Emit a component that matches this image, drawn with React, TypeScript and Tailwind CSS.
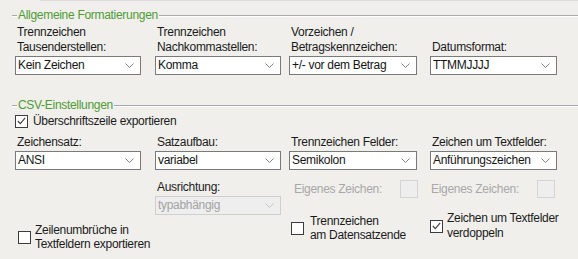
import React from "react";

function GroupTitle({ text }: { text: string }) {
  return (
    <div className="flex items-center h-[15px]">
      <span className="ml-[12px] w-[5px] h-[2px] border-t border-[#a9a9a9] border-b-white border-b" />
      <span className="px-[1px] text-[#4f9b35] leading-[15px]">{text}</span>
      <span className="flex-1 h-[2px] border-t border-[#a9a9a9] border-b-white border-b" />
    </div>
  );
}

function Chevron({ disabled }: { disabled?: boolean }) {
  return (
    <svg width="9" height="5" viewBox="0 0 9 5" className="shrink-0">
      <path d="M0.5 0.5 L4.5 4.5 L8.5 0.5" fill="none" stroke={disabled ? "#c4c4c4" : "#808080"} strokeWidth="1" />
    </svg>
  );
}

function Select({ value, disabled, w = "w-[126px]" }: { value: string; disabled?: boolean; w?: string }) {
  return (
    <div
      className={`${w} h-[19px] flex items-center justify-between pl-[2px] pr-[6px] border ${
        disabled ? "border-[#cfcfcf] bg-[#eeeeee] text-[#a3a3a3]" : "border-[#7a7a7a] bg-white text-[#141414]"
      }`}
    >
      <span className="leading-[15px] whitespace-nowrap">{value}</span>
      <Chevron disabled={disabled} />
    </div>
  );
}

function Check({ checked }: { checked?: boolean }) {
  return (
    <span className="w-[13px] h-[13px] shrink-0 border border-[#3c3c3c] bg-white flex items-center justify-center">
      {checked && (
        <svg width="9" height="8" viewBox="0 0 9 8">
          <path d="M0.8 4 L3.3 6.6 L8.2 0.8" fill="none" stroke="#3c3c3c" strokeWidth="1.1" />
        </svg>
      )}
    </span>
  );
}

function Label({ children }: { children: React.ReactNode }) {
  return <div className="pl-[2px] leading-[15px] whitespace-nowrap">{children}</div>;
}

function EigenesZeichen() {
  return (
    <div className="flex items-center h-[18px] text-[#a8a8a8]">
      <span className="pl-[5px] w-[111px] leading-[15px] whitespace-nowrap">Eigenes Zeichen:</span>
      <span className="w-[18px] h-[18px] border border-[#d4d4d4] bg-[#eeeeee]" />
    </div>
  );
}

export default function App() {
  return (
    <div className="w-[578px] h-[259px] overflow-hidden bg-[#f0efec] text-[12px] tracking-[-0.3px] text-[#1b1b1b] font-['Liberation_Sans',Arial,sans-serif]">
      <div className="ml-[40px] h-px bg-[#dcdcdc]" />
      <div className="mt-[7px]">
        <GroupTitle text="Allgemeine Formatierungen" />
      </div>

      <div className="pl-[15px] mt-[2px] grid grid-cols-[140px_135px_140px_1fr]">
        <div className="flex flex-col">
          <Label>Trennzeichen<br />Tausenderstellen:</Label>
          <div className="mt-[1px]"><Select value="Kein Zeichen" /></div>
        </div>
        <div className="flex flex-col">
          <Label>Trennzeichen<br />Nachkommastellen:</Label>
          <div className="mt-[1px]"><Select value="Komma" /></div>
        </div>
        <div className="flex flex-col -ml-[1px]">
          <Label>Vorzeichen /<br />Betragskennzeichen:</Label>
          <div className="mt-[1px]"><Select value="+/- vor dem Betrag" w="w-[128px]" /></div>
        </div>
        <div className="flex flex-col justify-end">
          <Label>Datumsformat:</Label>
          <div className="mt-[1px]"><Select value="TTMMJJJJ" w="w-[127px]" /></div>
        </div>
      </div>

      <div className="mt-[23px]">
        <GroupTitle text="CSV-Einstellungen" />
      </div>

      <div className="pl-[15px] mt-[1px] flex items-center gap-[5px] h-[14px]">
        <Check checked />
        <span className="leading-[15px] whitespace-nowrap">Überschriftszeile exportieren</span>
      </div>

      <div className="pl-[15px] mt-[7px] grid grid-cols-[140px_135px_140px_1fr]">
        <div className="flex flex-col">
          <Label>Zeichensatz:</Label>
          <div className="mt-[1px]"><Select value="ANSI" /></div>
          <div className="mt-[53px] ml-[3px] flex items-center gap-[4px]">
            <Check />
            <span className="leading-[14px] whitespace-nowrap">Zeilenumbrüche in<br />Textfeldern exportieren</span>
          </div>
        </div>
        <div className="flex flex-col">
          <Label>Satzaufbau:</Label>
          <div className="mt-[1px]"><Select value="variabel" /></div>
          <div className="mt-[10px]"><Label>Ausrichtung:</Label></div>
          <div className="mt-[1px]"><Select value="typabhängig" disabled /></div>
        </div>
        <div className="flex flex-col -ml-[1px]">
          <Label>Trennzeichen Felder:</Label>
          <div className="mt-[1px]"><Select value="Semikolon" w="w-[128px]" /></div>
          <div className="mt-[10px]"><EigenesZeichen /></div>
          <div className="mt-[16px] ml-[2px] flex items-center gap-[6px]">
            <Check />
            <span className="leading-[14px] whitespace-nowrap">Trennzeichen<br />am Datensatzende</span>
          </div>
        </div>
        <div className="flex flex-col">
          <Label>Zeichen um Textfelder:</Label>
          <div className="mt-[1px]"><Select value="Anführungszeichen" w="w-[127px]" /></div>
          <div className="mt-[10px] -ml-[4px]"><EigenesZeichen /></div>
          <div className="mt-[13px] flex items-center gap-[4px]">
            <Check checked />
            <span className="leading-[15px] whitespace-nowrap">Zeichen um Textfelder<br />verdoppeln</span>
          </div>
        </div>
      </div>
    </div>
  );
}
